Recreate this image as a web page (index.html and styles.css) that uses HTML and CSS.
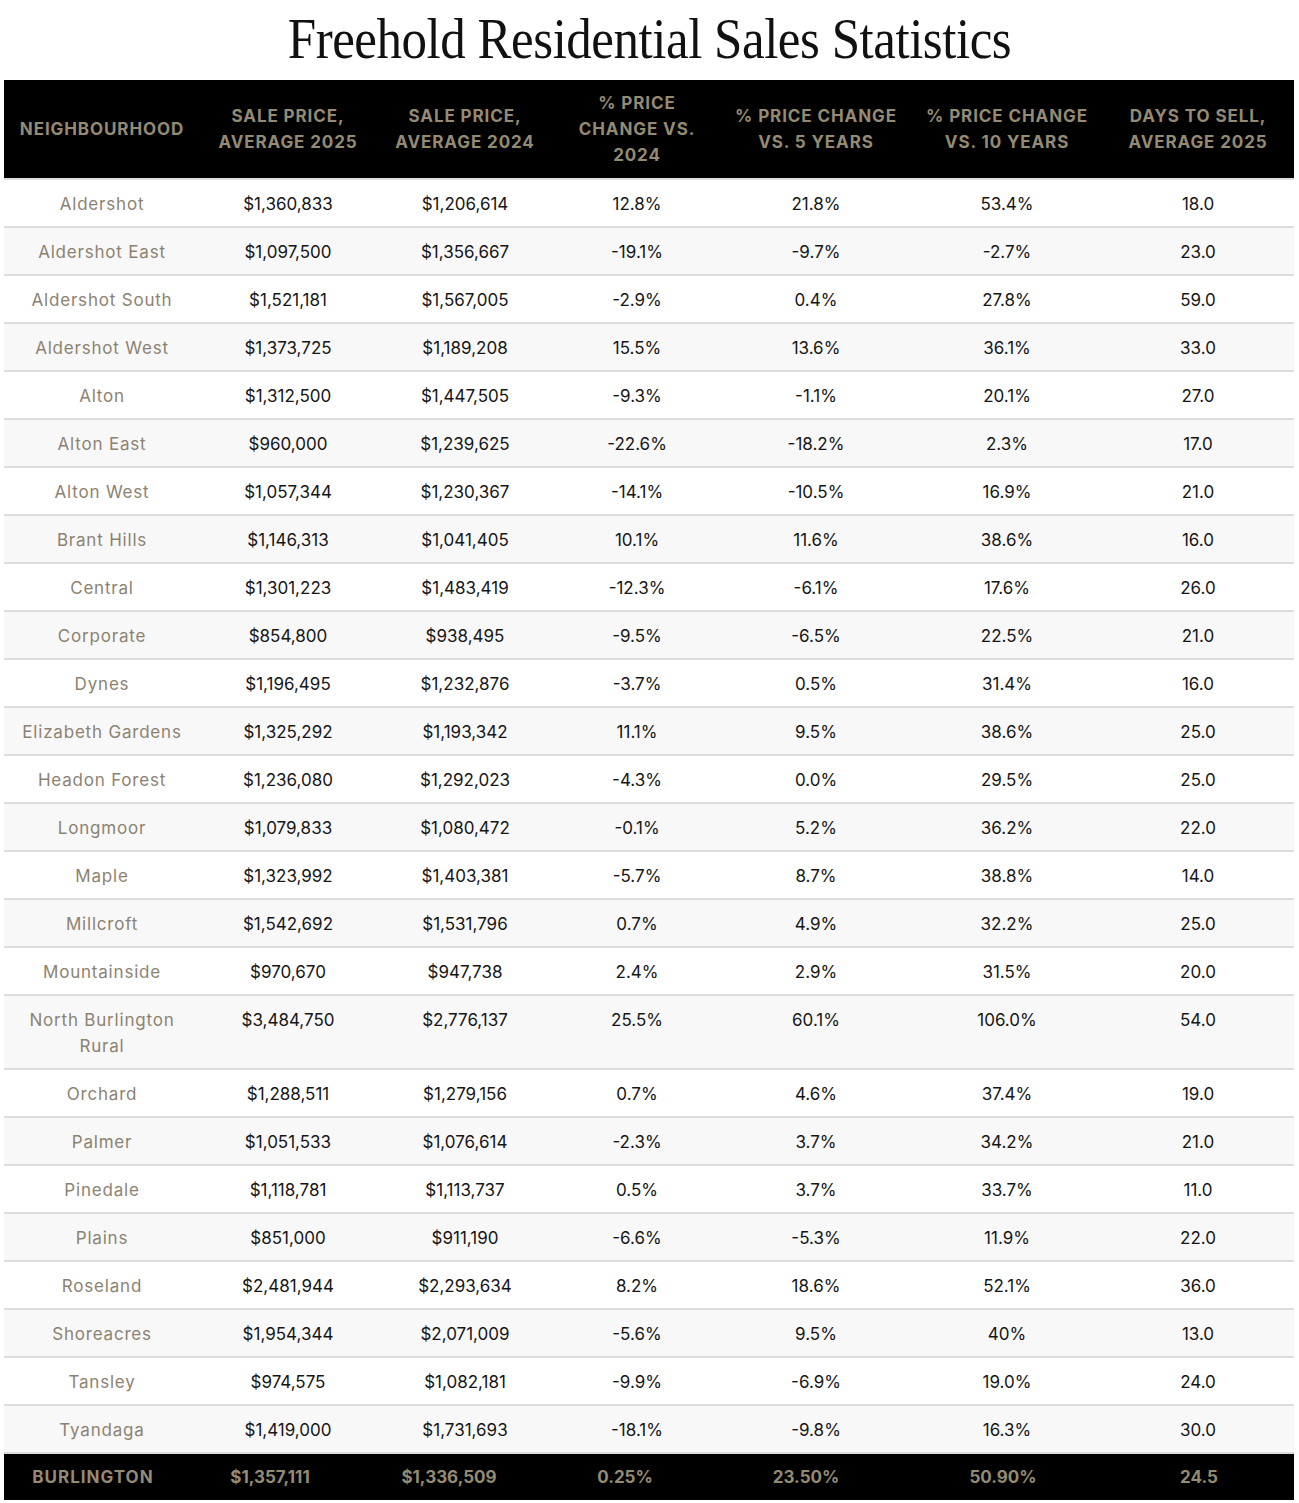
FILE: index.html
```html
<!DOCTYPE html>
<html lang="en">
<head>
<meta charset="utf-8">
<title>Freehold Residential Sales Statistics</title>
<link rel="stylesheet" href="styles.css">
</head>
<body>
<div class="page">
  <h1 class="title"><span class="title-text">Freehold Residential Sales Statistics</span></h1>
  <table class="stats">
    <thead>
      <tr>
        <th class="c1">Neighbourhood</th>
        <th class="c2">Sale Price,<br>Average 2025</th>
        <th class="c3">Sale Price,<br>Average 2024</th>
        <th class="c4">% Price<br>Change vs.<br>2024</th>
        <th class="c5">% Price Change<br>vs. 5 Years</th>
        <th class="c6">% Price Change<br>vs. 10 Years</th>
        <th class="c7">Days to Sell,<br>Average 2025</th>
      </tr>
    </thead>
    <tbody>
      <tr><td class="name">Aldershot</td><td>$1,360,833</td><td>$1,206,614</td><td>12.8%</td><td>21.8%</td><td>53.4%</td><td>18.0</td></tr>
      <tr><td class="name">Aldershot East</td><td>$1,097,500</td><td>$1,356,667</td><td>-19.1%</td><td>-9.7%</td><td>-2.7%</td><td>23.0</td></tr>
      <tr><td class="name">Aldershot South</td><td>$1,521,181</td><td>$1,567,005</td><td>-2.9%</td><td>0.4%</td><td>27.8%</td><td>59.0</td></tr>
      <tr><td class="name">Aldershot West</td><td>$1,373,725</td><td>$1,189,208</td><td>15.5%</td><td>13.6%</td><td>36.1%</td><td>33.0</td></tr>
      <tr><td class="name">Alton</td><td>$1,312,500</td><td>$1,447,505</td><td>-9.3%</td><td>-1.1%</td><td>20.1%</td><td>27.0</td></tr>
      <tr><td class="name">Alton East</td><td>$960,000</td><td>$1,239,625</td><td>-22.6%</td><td>-18.2%</td><td>2.3%</td><td>17.0</td></tr>
      <tr><td class="name">Alton West</td><td>$1,057,344</td><td>$1,230,367</td><td>-14.1%</td><td>-10.5%</td><td>16.9%</td><td>21.0</td></tr>
      <tr><td class="name">Brant Hills</td><td>$1,146,313</td><td>$1,041,405</td><td>10.1%</td><td>11.6%</td><td>38.6%</td><td>16.0</td></tr>
      <tr><td class="name">Central</td><td>$1,301,223</td><td>$1,483,419</td><td>-12.3%</td><td>-6.1%</td><td>17.6%</td><td>26.0</td></tr>
      <tr><td class="name">Corporate</td><td>$854,800</td><td>$938,495</td><td>-9.5%</td><td>-6.5%</td><td>22.5%</td><td>21.0</td></tr>
      <tr><td class="name">Dynes</td><td>$1,196,495</td><td>$1,232,876</td><td>-3.7%</td><td>0.5%</td><td>31.4%</td><td>16.0</td></tr>
      <tr><td class="name">Elizabeth Gardens</td><td>$1,325,292</td><td>$1,193,342</td><td>11.1%</td><td>9.5%</td><td>38.6%</td><td>25.0</td></tr>
      <tr><td class="name">Headon Forest</td><td>$1,236,080</td><td>$1,292,023</td><td>-4.3%</td><td>0.0%</td><td>29.5%</td><td>25.0</td></tr>
      <tr><td class="name">Longmoor</td><td>$1,079,833</td><td>$1,080,472</td><td>-0.1%</td><td>5.2%</td><td>36.2%</td><td>22.0</td></tr>
      <tr><td class="name">Maple</td><td>$1,323,992</td><td>$1,403,381</td><td>-5.7%</td><td>8.7%</td><td>38.8%</td><td>14.0</td></tr>
      <tr><td class="name">Millcroft</td><td>$1,542,692</td><td>$1,531,796</td><td>0.7%</td><td>4.9%</td><td>32.2%</td><td>25.0</td></tr>
      <tr><td class="name">Mountainside</td><td>$970,670</td><td>$947,738</td><td>2.4%</td><td>2.9%</td><td>31.5%</td><td>20.0</td></tr>
      <tr><td class="name">North Burlington<br>Rural</td><td>$3,484,750</td><td>$2,776,137</td><td>25.5%</td><td>60.1%</td><td>106.0%</td><td>54.0</td></tr>
      <tr><td class="name">Orchard</td><td>$1,288,511</td><td>$1,279,156</td><td>0.7%</td><td>4.6%</td><td>37.4%</td><td>19.0</td></tr>
      <tr><td class="name">Palmer</td><td>$1,051,533</td><td>$1,076,614</td><td>-2.3%</td><td>3.7%</td><td>34.2%</td><td>21.0</td></tr>
      <tr><td class="name">Pinedale</td><td>$1,118,781</td><td>$1,113,737</td><td>0.5%</td><td>3.7%</td><td>33.7%</td><td>11.0</td></tr>
      <tr><td class="name">Plains</td><td>$851,000</td><td>$911,190</td><td>-6.6%</td><td>-5.3%</td><td>11.9%</td><td>22.0</td></tr>
      <tr><td class="name">Roseland</td><td>$2,481,944</td><td>$2,293,634</td><td>8.2%</td><td>18.6%</td><td>52.1%</td><td>36.0</td></tr>
      <tr><td class="name">Shoreacres</td><td>$1,954,344</td><td>$2,071,009</td><td>-5.6%</td><td>9.5%</td><td>40%</td><td>13.0</td></tr>
      <tr><td class="name">Tansley</td><td>$974,575</td><td>$1,082,181</td><td>-9.9%</td><td>-6.9%</td><td>19.0%</td><td>24.0</td></tr>
      <tr><td class="name">Tyandaga</td><td>$1,419,000</td><td>$1,731,693</td><td>-18.1%</td><td>-9.8%</td><td>16.3%</td><td>30.0</td></tr>
    </tbody>
  </table>
  <div class="totals">
    <div class="tcell tname">Burlington</div>
    <div class="tcell">$1,357,111</div>
    <div class="tcell">$1,336,509</div>
    <div class="tcell">0.25%</div>
    <div class="tcell">23.50%</div>
    <div class="tcell">50.90%</div>
    <div class="tcell">24.5</div>
  </div>
</div>
</body>
</html>
```

FILE: styles.css
```css
* { box-sizing: border-box; }

html, body {
  margin: 0;
  padding: 0;
  background: #ffffff;
}

.page {
  padding: 0 5px 0 4px;
  font-family: "Inter", "DejaVu Sans", sans-serif;
}

.title {
  margin: 0;
  height: 80px;
  display: flex;
  align-items: center;
  justify-content: center;
  padding-bottom: 2px;
  font-family: "Liberation Serif", serif;
  font-weight: 400;
  font-size: 56px;
  color: #111;
}

.title-text {
  display: inline-block;
  letter-spacing: -0.5px;
  white-space: nowrap;
  transform: scaleX(0.91);
  transform-origin: center;
}

.stats {
  width: 1290px;
  border-collapse: collapse;
  table-layout: fixed;
}

.stats th {
  background: #000;
  color: #958a72;
  font-weight: 700;
  font-size: 17px;
  letter-spacing: 0.9px;
  line-height: 26px;
  text-transform: uppercase;
  text-align: center;
  vertical-align: middle;
  padding: 10px 4px;
  border-bottom: 2px solid #dddddd;
  white-space: nowrap;
}

.c1 { width: 196px; }
.c2 { width: 176px; }
.c3 { width: 178px; }
.c4 { width: 166px; }
.c5 { width: 192px; }
.c6 { width: 190px; }
.c7 { width: 192px; }

.stats td {
  font-size: 17px;
  line-height: 26px;
  color: #151515;
  text-align: center;
  vertical-align: top;
  padding: 11px 6px 9px;
  border-bottom: 2px solid #dddddd;
}

.stats tbody tr:nth-child(even) td {
  background: #f8f8f8;
}

.stats td.name {
  color: #8c8272;
  letter-spacing: 0.8px;
}

.totals {
  width: 1290px;
  display: grid;
  grid-template-columns: 178px 176px 182px 170px 192px 202px 190px;
  background: #000;
  height: 46px;
  align-items: center;
}

.tcell {
  text-align: center;
  color: #958a72;
  font-weight: 700;
  font-size: 17px;
}

.tcell.tname {
  text-transform: uppercase;
  letter-spacing: 1px;
}
```
